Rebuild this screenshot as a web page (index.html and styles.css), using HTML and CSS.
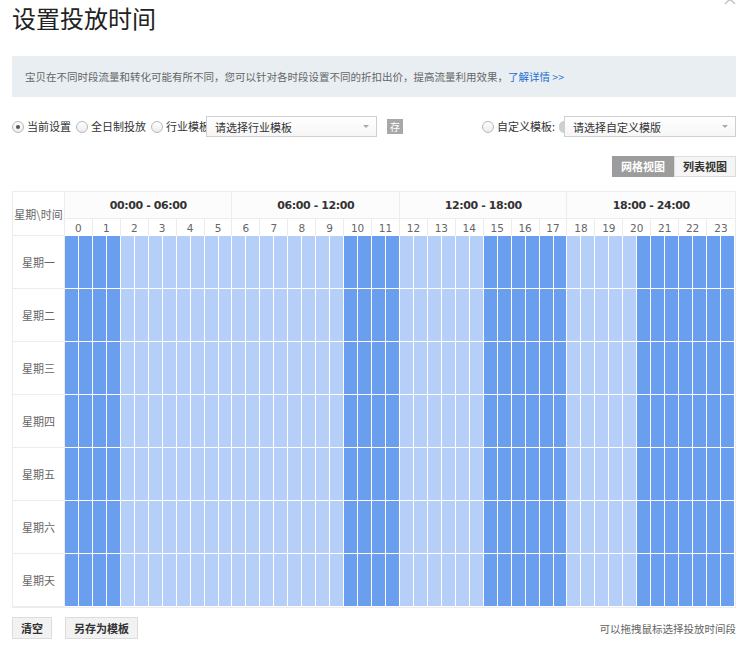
FILE: index.html
```html
<!DOCTYPE html>
<html lang="zh-CN">
<head>
<meta charset="utf-8">
<title>设置投放时间</title>
<link rel="stylesheet" href="styles.css">
</head>
<body>
<div class="page">
  <span class="close"><svg width="12" height="12" viewBox="0 0 12 12"><path d="M1 1 L11 11 M11 1 L1 11" stroke="#c8c8c8" stroke-width="1.6" fill="none"/></svg></span>
  <h1 class="title">设置投放时间</h1>
  <div class="info">宝贝在不同时段流量和转化可能有所不同，您可以针对各时段设置不同的折扣出价，提高流量利用效果，<a class="more">了解详情 &gt;&gt;</a></div>

  <div class="toolbar">
    <div class="group">
      <label class="opt"><span class="radio checked"></span><span class="lbl">当前设置</span></label>
      <label class="opt"><span class="radio"></span><span class="lbl">全日制投放</span></label>
      <label class="opt"><span class="radio"></span><span class="lbl clip">行业模板</span></label>
      <div class="select w170"><span>请选择行业模板</span><span class="arrow"></span></div>
      <span class="save">存</span>
    </div>
    <div class="group">
      <label class="opt"><span class="radio"></span><span class="lbl">自定义模板:</span></label>
      <span class="half"></span>
      <div class="select w172"><span>请选择自定义模版</span><span class="arrow"></span></div>
    </div>
  </div>

  <div class="views">
    <span class="vbtn active">网格视图</span><span class="vbtn">列表视图</span>
  </div>

  <div class="sched">
    <div class="corner">星期\时间</div>
    <div class="grp">00:00 - 06:00</div>
    <div class="grp">06:00 - 12:00</div>
    <div class="grp">12:00 - 18:00</div>
    <div class="grp last">18:00 - 24:00</div>
    <div class="hr">0</div><div class="hr">1</div><div class="hr">2</div><div class="hr">3</div><div class="hr">4</div><div class="hr">5</div><div class="hr">6</div><div class="hr">7</div><div class="hr">8</div><div class="hr">9</div><div class="hr">10</div><div class="hr">11</div><div class="hr">12</div><div class="hr">13</div><div class="hr">14</div><div class="hr">15</div><div class="hr">16</div><div class="hr">17</div><div class="hr">18</div><div class="hr">19</div><div class="hr">20</div><div class="hr">21</div><div class="hr">22</div><div class="hr last">23</div>

    <div class="day">星期一</div>
    <i class="c on"></i><i class="c on"></i><i class="c on"></i><i class="c on"></i><i class="c"></i><i class="c"></i><i class="c"></i><i class="c"></i><i class="c"></i><i class="c"></i><i class="c"></i><i class="c"></i><i class="c"></i><i class="c"></i><i class="c"></i><i class="c"></i><i class="c"></i><i class="c"></i><i class="c"></i><i class="c"></i><i class="c on"></i><i class="c on"></i><i class="c on"></i><i class="c on"></i><i class="c"></i><i class="c"></i><i class="c"></i><i class="c"></i><i class="c"></i><i class="c"></i><i class="c on"></i><i class="c on"></i><i class="c on"></i><i class="c on"></i><i class="c on"></i><i class="c on"></i><i class="c"></i><i class="c"></i><i class="c"></i><i class="c"></i><i class="c"></i><i class="c on"></i><i class="c on"></i><i class="c on"></i><i class="c on"></i><i class="c on"></i><i class="c on"></i><i class="c on"></i>

    <div class="day">星期二</div>
    <i class="c on"></i><i class="c on"></i><i class="c on"></i><i class="c on"></i><i class="c"></i><i class="c"></i><i class="c"></i><i class="c"></i><i class="c"></i><i class="c"></i><i class="c"></i><i class="c"></i><i class="c"></i><i class="c"></i><i class="c"></i><i class="c"></i><i class="c"></i><i class="c"></i><i class="c"></i><i class="c"></i><i class="c on"></i><i class="c on"></i><i class="c on"></i><i class="c on"></i><i class="c"></i><i class="c"></i><i class="c"></i><i class="c"></i><i class="c"></i><i class="c"></i><i class="c on"></i><i class="c on"></i><i class="c on"></i><i class="c on"></i><i class="c on"></i><i class="c on"></i><i class="c"></i><i class="c"></i><i class="c"></i><i class="c"></i><i class="c"></i><i class="c on"></i><i class="c on"></i><i class="c on"></i><i class="c on"></i><i class="c on"></i><i class="c on"></i><i class="c on"></i>

    <div class="day">星期三</div>
    <i class="c on"></i><i class="c on"></i><i class="c on"></i><i class="c on"></i><i class="c"></i><i class="c"></i><i class="c"></i><i class="c"></i><i class="c"></i><i class="c"></i><i class="c"></i><i class="c"></i><i class="c"></i><i class="c"></i><i class="c"></i><i class="c"></i><i class="c"></i><i class="c"></i><i class="c"></i><i class="c"></i><i class="c on"></i><i class="c on"></i><i class="c on"></i><i class="c on"></i><i class="c"></i><i class="c"></i><i class="c"></i><i class="c"></i><i class="c"></i><i class="c"></i><i class="c on"></i><i class="c on"></i><i class="c on"></i><i class="c on"></i><i class="c on"></i><i class="c on"></i><i class="c"></i><i class="c"></i><i class="c"></i><i class="c"></i><i class="c"></i><i class="c on"></i><i class="c on"></i><i class="c on"></i><i class="c on"></i><i class="c on"></i><i class="c on"></i><i class="c on"></i>

    <div class="day">星期四</div>
    <i class="c on"></i><i class="c on"></i><i class="c on"></i><i class="c on"></i><i class="c"></i><i class="c"></i><i class="c"></i><i class="c"></i><i class="c"></i><i class="c"></i><i class="c"></i><i class="c"></i><i class="c"></i><i class="c"></i><i class="c"></i><i class="c"></i><i class="c"></i><i class="c"></i><i class="c"></i><i class="c"></i><i class="c on"></i><i class="c on"></i><i class="c on"></i><i class="c on"></i><i class="c"></i><i class="c"></i><i class="c"></i><i class="c"></i><i class="c"></i><i class="c"></i><i class="c on"></i><i class="c on"></i><i class="c on"></i><i class="c on"></i><i class="c on"></i><i class="c on"></i><i class="c"></i><i class="c"></i><i class="c"></i><i class="c"></i><i class="c"></i><i class="c on"></i><i class="c on"></i><i class="c on"></i><i class="c on"></i><i class="c on"></i><i class="c on"></i><i class="c on"></i>

    <div class="day">星期五</div>
    <i class="c on"></i><i class="c on"></i><i class="c on"></i><i class="c on"></i><i class="c"></i><i class="c"></i><i class="c"></i><i class="c"></i><i class="c"></i><i class="c"></i><i class="c"></i><i class="c"></i><i class="c"></i><i class="c"></i><i class="c"></i><i class="c"></i><i class="c"></i><i class="c"></i><i class="c"></i><i class="c"></i><i class="c on"></i><i class="c on"></i><i class="c on"></i><i class="c on"></i><i class="c"></i><i class="c"></i><i class="c"></i><i class="c"></i><i class="c"></i><i class="c"></i><i class="c on"></i><i class="c on"></i><i class="c on"></i><i class="c on"></i><i class="c on"></i><i class="c on"></i><i class="c"></i><i class="c"></i><i class="c"></i><i class="c"></i><i class="c"></i><i class="c on"></i><i class="c on"></i><i class="c on"></i><i class="c on"></i><i class="c on"></i><i class="c on"></i><i class="c on"></i>

    <div class="day">星期六</div>
    <i class="c on"></i><i class="c on"></i><i class="c on"></i><i class="c on"></i><i class="c"></i><i class="c"></i><i class="c"></i><i class="c"></i><i class="c"></i><i class="c"></i><i class="c"></i><i class="c"></i><i class="c"></i><i class="c"></i><i class="c"></i><i class="c"></i><i class="c"></i><i class="c"></i><i class="c"></i><i class="c"></i><i class="c on"></i><i class="c on"></i><i class="c on"></i><i class="c on"></i><i class="c"></i><i class="c"></i><i class="c"></i><i class="c"></i><i class="c"></i><i class="c"></i><i class="c on"></i><i class="c on"></i><i class="c on"></i><i class="c on"></i><i class="c on"></i><i class="c on"></i><i class="c"></i><i class="c"></i><i class="c"></i><i class="c"></i><i class="c"></i><i class="c on"></i><i class="c on"></i><i class="c on"></i><i class="c on"></i><i class="c on"></i><i class="c on"></i><i class="c on"></i>

    <div class="day">星期天</div>
    <i class="c on"></i><i class="c on"></i><i class="c on"></i><i class="c on"></i><i class="c"></i><i class="c"></i><i class="c"></i><i class="c"></i><i class="c"></i><i class="c"></i><i class="c"></i><i class="c"></i><i class="c"></i><i class="c"></i><i class="c"></i><i class="c"></i><i class="c"></i><i class="c"></i><i class="c"></i><i class="c"></i><i class="c on"></i><i class="c on"></i><i class="c on"></i><i class="c on"></i><i class="c"></i><i class="c"></i><i class="c"></i><i class="c"></i><i class="c"></i><i class="c"></i><i class="c on"></i><i class="c on"></i><i class="c on"></i><i class="c on"></i><i class="c on"></i><i class="c on"></i><i class="c"></i><i class="c"></i><i class="c"></i><i class="c"></i><i class="c"></i><i class="c on"></i><i class="c on"></i><i class="c on"></i><i class="c on"></i><i class="c on"></i><i class="c on"></i><i class="c on"></i>
  </div>

  <div class="footer">
    <div class="btns">
      <span class="btn">清空</span>
      <span class="btn">另存为模板</span>
    </div>
    <span class="hint">可以拖拽鼠标选择投放时间段</span>
  </div>
</div>
</body>
</html>
```

FILE: styles.css
```css
* { box-sizing: border-box; }
html, body { margin: 0; padding: 0; background: #fff; }
body {
  font-family: "Noto Sans CJK SC", "Noto Sans", sans-serif;
  color: #333;
}
.page {
  position: relative;
  width: 750px;
  padding: 0 14px 0 12px;
}
.close {
  position: absolute;
  top: -7px;
  right: 14px;
  line-height: 0;
}
.title {
  margin: 0 0 20px;
  font-size: 24px;
  line-height: 36px;
  font-weight: normal;
  color: #222;
}
.info {
  height: 41px;
  line-height: 41px;
  padding-left: 13px;
  background: #e8eef2;
  font-size: 10.5px;
  color: #666;
  white-space: nowrap;
}
.more { color: #1f6fd0; }

.toolbar {
  margin-top: 19px;
  height: 21px;
  display: flex;
  justify-content: space-between;
  align-items: center;
}
.group { display: flex; align-items: center; }
.opt {
  display: flex;
  align-items: center;
  margin-right: 5px;
}
.radio {
  width: 12px;
  height: 12px;
  border-radius: 50%;
  border: 1px solid #b8b8b8;
  background: linear-gradient(#fff, #ececec);
  margin-right: 3px;
  display: flex;
  align-items: center;
  justify-content: center;
}
.radio.checked::after {
  content: "";
  width: 4px;
  height: 4px;
  border-radius: 50%;
  background: #555;
}
.lbl {
  font-size: 11px;
  color: #333;
  white-space: nowrap;
  line-height: 21px;
}
.lbl.clip {
  width: 40px;
  overflow: hidden;
}
.opt:nth-child(3) { margin-right: 0; }
.select {
  height: 21px;
  border: 1px solid #cfcfcf;
  background: linear-gradient(#fff, #f6f6f6);
  display: flex;
  align-items: center;
  justify-content: space-between;
  padding: 0 7px 0 8px;
  font-size: 11px;
  color: #333;
}
.w170 { width: 171px; }
.w172 { width: 172px; }
.arrow {
  width: 0;
  height: 0;
  border-left: 3px solid transparent;
  border-right: 3px solid transparent;
  border-top: 3px solid #aaa;
}
.save {
  margin-left: 10px;
  width: 16px;
  height: 15px;
  background: #a8a8a8;
  color: #fff;
  font-size: 10px;
  line-height: 15px;
  text-align: center;
}
.half {
  width: 5px;
  height: 12px;
  border-radius: 6px 0 0 6px;
  background: #cfcfcf;
  margin-left: -1px;
}

.views {
  margin-top: 19px;
  display: flex;
  justify-content: flex-end;
  height: 21px;
}
.vbtn {
  height: 21px;
  line-height: 19px;
  padding: 0 8px;
  font-size: 11px;
  font-weight: bold;
  color: #333;
  background: #f5f5f5;
  border: 1px solid #dcdcdc;
}
.vbtn.active {
  background: #9c9c9c;
  border-color: #9c9c9c;
  color: #fff;
}

.sched {
  margin-top: 14px;
  border: 1px solid #ececec;
  display: grid;
  grid-template-columns: 52px repeat(48, 1fr);
  grid-template-rows: 27px 17px repeat(7, 53px);
}
.corner {
  grid-row: span 2;
  display: flex;
  align-items: center;
  justify-content: center;
  font-size: 11px;
  color: #666;
  border-right: 1px solid #ececec;
  border-bottom: 1px solid #ececec;
  white-space: nowrap;
}
.grp {
  grid-column: span 12;
  display: flex;
  align-items: center;
  justify-content: center;
  font-family: "DejaVu Sans", sans-serif;
  font-weight: bold;
  font-size: 11px;
  letter-spacing: -0.4px;
  color: #333;
  background: #fcfcfc;
  border-right: 1px solid #ececec;
  border-bottom: 1px solid #ececec;
}
.hr {
  grid-column: span 2;
  display: flex;
  align-items: center;
  justify-content: center;
  font-family: "DejaVu Sans", sans-serif;
  font-size: 10.5px;
  color: #666;
  border-right: 1px solid #ececec;
}
.grp.last, .hr.last { border-right: 0; }
.day {
  display: flex;
  align-items: center;
  justify-content: center;
  font-size: 11px;
  color: #666;
  border-bottom: 1px solid #ececec;
  border-right: 1px solid #ececec;
}
.c {
  display: block;
  background: #b5cff8;
  border-right: 1px solid #fff;
  border-bottom: 1px solid #fff;
}
.c.on { background: #6a9ff0; }

.footer {
  margin-top: 9px;
  display: flex;
  justify-content: space-between;
  align-items: center;
}
.btns { display: flex; gap: 13px; }
.btn {
  height: 22px;
  line-height: 20px;
  padding: 0 8px;
  font-size: 11px;
  font-weight: bold;
  color: #333;
  background: #f2f2f2;
  border: 1px solid #dcdcdc;
}
.hint {
  font-size: 10.5px;
  color: #666;
}
```
